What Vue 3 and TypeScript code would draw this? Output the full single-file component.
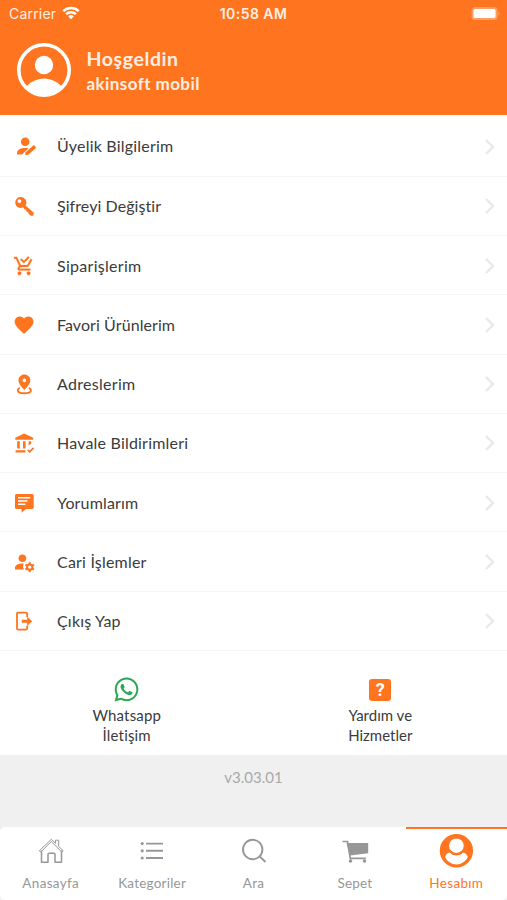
<script setup lang="ts">
interface MenuItem {
  id: string
  label: string
}

interface Tab {
  id: string
  label: string
}

const menu: MenuItem[] = [
  { id: 'profile', label: 'Üyelik Bilgilerim' },
  { id: 'key', label: 'Şifreyi Değiştir' },
  { id: 'orders', label: 'Siparişlerim' },
  { id: 'favorites', label: 'Favori Ürünlerim' },
  { id: 'address', label: 'Adreslerim' },
  { id: 'bank', label: 'Havale Bildirimleri' },
  { id: 'comments', label: 'Yorumlarım' },
  { id: 'account', label: 'Cari İşlemler' },
  { id: 'logout', label: 'Çıkış Yap' },
]

const tabs: Tab[] = [
  { id: 'home', label: 'Anasayfa' },
  { id: 'categories', label: 'Kategoriler' },
  { id: 'search', label: 'Ara' },
  { id: 'cart', label: 'Sepet' },
  { id: 'me', label: 'Hesabım' },
]
const activeTab = 'me'
</script>

<template>
  <div class="screen">
    <header class="header">
      <div class="status">
        <div class="carrier">
          <span>Carrier</span>
          <svg class="wifi" viewBox="0 0 18 14" width="18" height="14">
            <path d="M1.300 5.200a11 11 0 0 1 15.400 0M4.100 8.200a7 7 0 0 1 9.800 0" fill="none" stroke="#fff" stroke-width="2.400" />
            <path d="M6.200 10.300a4 4 0 0 1 5.600 0L9 13.200z" fill="#fff" />
          </svg>
        </div>
        <span class="clock">10:58 AM</span>
        <div class="power">
          <svg viewBox="0 0 31 15" width="31" height="15">
            <rect x="1.500" y="1" width="26" height="13" rx="3.500" fill="#fff" fill-opacity=".3" />
            <rect x="3.500" y="3" width="22" height="9" rx="1.500" fill="#fff" />
            <path d="M28.500 5.500q2 2 0 4z" fill="#fff" fill-opacity=".4" />
          </svg>
        </div>
      </div>
      <div class="welcome">
        <svg class="avatar" viewBox="0 0 54 54" width="54" height="54">
          <defs><clipPath id="avatar-clip"><circle cx="27" cy="27" r="26" /></clipPath></defs>
          <circle cx="27" cy="27" r="25.200" fill="none" stroke="#fff" stroke-width="3.600" />
          <circle cx="27" cy="22" r="9.200" fill="#fff" />
          <path clip-path="url(#avatar-clip)" d="M8 45c5-6 12-9.500 19-9.500s14 3.500 19 9.500v9H8z" fill="#fff" />
        </svg>
        <div class="greeting">
          <div class="hello">Hoşgeldin</div>
          <div class="name">akinsoft mobil</div>
        </div>
      </div>
    </header>

    <main class="menu">
      <div v-for="item in menu" :key="item.id" class="row">
        <svg class="icon" viewBox="0 0 24 24" width="24" height="24" fill="currentColor">
          <g v-if="item.id === 'profile'">
            <circle cx="13.200" cy="6.800" r="4.300" />
            <path d="M5 19.500v-1.700c0-3 3.800-4.900 8.200-4.900 1.200 0 2.300.1 3.300.5L10 19.500z" />
            <path d="m13.100 20.100.6-2.900 7.200-6.500q.9-.7 1.800.1l.9.900q.6.900-.2 1.700l-7.200 6.300z" />
          </g>
          <path v-else-if="item.id === 'key'" fill-rule="evenodd" d="M8.200 3.100a5.400 5.400 0 1 0 2.100 10.500l1.300-.1.700 1.700 1.700.5.400 1.900 1.800.6.700 1.800 1.900 1.700h2.600l.4-2.900-8.300-7.400A5.400 5.400 0 0 0 8.200 3.100M7.400 5.200a1.900 1.900 0 1 1 0 3.800 1.900 1.900 0 0 1 0-3.800" />
          <path v-else-if="item.id === 'orders'" transform="translate(1.100 1.100) scale(.91)" stroke="currentColor" stroke-width=".3" d="M9 20C9 21.100 8.100 22 7 22S5 21.100 5 20 5.900 18 7 18 9 18.900 9 20M17 18C15.900 18 15 18.900 15 20S15.900 22 17 22 19 21.100 19 20 18.100 18 17 18M7.200 14.800V14.700L8.100 13H15.500C16.200 13 16.900 12.600 17.200 12L21.100 5L19.400 4L15.500 11H8.500L4.300 2H1V4H3L6.600 11.600L5.200 14C5.100 14.300 5 14.600 5 15C5 16.100 5.900 17 7 17H19V15H7.400C7.300 15 7.200 14.900 7.200 14.800M18 2.800L16.600 1.400L11.800 6.200L9.200 3.600L7.800 5L11.800 9L18 2.800Z" />
          <path v-else-if="item.id === 'favorites'" transform="translate(.8 .8) scale(.94)" d="M12,21.350L10.550,20.030C5.400,15.360 2,12.270 2,8.500C2,5.410 4.420,3 7.500,3C9.240,3 10.910,3.810 12,5.080C13.090,3.810 14.760,3 16.500,3C19.580,3 22,5.410 22,8.500C22,12.270 18.600,15.360 13.450,20.030L12,21.350Z" />
          <g v-else-if="item.id === 'address'">
            <path fill-rule="evenodd" d="M12.400 2.500c-3.300 0-5.900 2.500-5.900 5.800 0 3.700 3.500 7.300 5.900 9.600 2.400-2.300 5.900-5.900 5.900-9.600 0-3.300-2.600-5.800-5.900-5.800m0 3.900a1.900 1.900 0 1 1 0 3.800 1.900 1.900 0 0 1 0-3.800" />
            <path d="M7.800 15.900C6.500 16.500 5.800 17.400 5.800 18.300c0 1.900 3 3 6.600 3s6.600-1.100 6.600-3c0-.9-.7-1.800-2-2.400" fill="none" stroke="currentColor" stroke-width="1.900" />
          </g>
          <g v-else-if="item.id === 'bank'">
            <path d="m12.200 2.600 9 4.200v1.900H3.300V6.800z" />
            <path d="M5.200 10.300h2.600v7.200H5.200zM11 10.300h2.600v7.200H11zM3.600 19.200h9.800v2.300H3.600z" />
            <path d="M16.600 10.300h2.600v2.300l-2.600 2z" />
            <path d="m15.800 18.800 2 2 3.700-4" fill="none" stroke="currentColor" stroke-width="1.700" />
          </g>
          <g v-else-if="item.id === 'comments'">
            <path d="M4.500 3h15.700q1.500 0 1.500 1.500v12q0 1.500-1.500 1.500H14l-4.400 3.800V18H4.500Q3 18 3 16.500v-12Q3 3 4.500 3z" />
            <path d="M6 6.700h12.300M6 10h9.500M6 13.300h7.500" stroke="#fff" stroke-width="1.400" />
          </g>
          <g v-else-if="item.id === 'account'">
            <circle cx="10.400" cy="8.300" r="3.800" />
            <path d="M3 19.600v-1.900c0-2.500 3.500-4.100 7.300-4.100h1.300a7 7 0 0 0 .3 6z" />
            <circle cx="17.700" cy="17.100" r="2.700" fill="none" stroke="currentColor" stroke-width="2" />
            <path d="M17.700 12.300v2M17.700 19.900v2M13.500 14.700l1.700 1M20.200 18.500l1.700 1M13.500 19.500l1.700-1M20.200 15.700l1.700-1" stroke="currentColor" stroke-width="2.200" />
          </g>
          <g v-else>
            <path d="M15.200 8V4.800q0-1.200-1.200-1.200H6.200Q5 3.600 5 4.800v14.600q0 1.200 1.200 1.200H14q1.200 0 1.200-1.200V16.500" fill="none" stroke="currentColor" stroke-width="1.800" />
            <path d="M9.800 10.700h5.400V7.700l5 4.500-5 4.500v-3H9.800z" />
          </g>
        </svg>
        <span class="label" :class="item.id">{{ item.label }}</span>
        <svg class="chevron" viewBox="0 0 12 18" width="12" height="18">
          <path d="m2 2 7 7-7 7" fill="none" stroke="currentColor" stroke-width="2.400" />
        </svg>
      </div>
    </main>

    <section class="help">
      <div class="help-item contact">
        <svg class="whatsapp" viewBox="1.500 1.500 21 21" width="25" height="25">
          <path d="M12.040 2C6.580 2 2.130 6.450 2.130 11.910C2.130 13.660 2.590 15.360 3.450 16.860L2.050 22L7.300 20.620C8.750 21.410 10.380 21.830 12.040 21.830C17.500 21.830 21.950 17.380 21.950 11.920C21.950 9.270 20.920 6.780 19.050 4.910C17.180 3.030 14.690 2 12.040 2M12.050 3.670C14.250 3.670 16.310 4.530 17.870 6.090C19.420 7.650 20.280 9.720 20.280 11.920C20.280 16.460 16.580 20.150 12.040 20.150C10.560 20.150 9.110 19.760 7.850 19L7.550 18.830L4.430 19.650L5.260 16.610L5.060 16.290C4.240 15 3.800 13.470 3.800 11.910C3.810 7.370 7.500 3.670 12.050 3.670M8.530 7.330C8.370 7.330 8.100 7.390 7.870 7.640C7.650 7.890 7 8.500 7 9.710C7 10.930 7.890 12.100 8 12.270C8.140 12.440 9.760 14.940 12.250 16C12.840 16.270 13.300 16.420 13.660 16.530C14.250 16.720 14.790 16.690 15.220 16.630C15.700 16.560 16.680 16.030 16.890 15.450C17.100 14.870 17.100 14.380 17.040 14.270C16.970 14.170 16.810 14.110 16.560 14C16.310 13.860 15.090 13.260 14.870 13.180C14.640 13.100 14.500 13.060 14.310 13.300C14.150 13.550 13.670 14.110 13.530 14.270C13.380 14.440 13.240 14.460 13 14.340C12.740 14.210 11.940 13.950 11 13.110C10.260 12.450 9.770 11.640 9.620 11.390C9.500 11.150 9.610 11 9.730 10.890C9.840 10.780 10 10.600 10.100 10.450C10.230 10.310 10.270 10.200 10.350 10.040C10.430 9.870 10.390 9.730 10.330 9.610C10.270 9.500 9.770 8.260 9.560 7.770C9.360 7.290 9.160 7.350 9 7.340C8.860 7.340 8.700 7.330 8.530 7.330Z" fill="currentColor" />
        </svg>
        <span>Whatsapp</span>
        <span>İletişim</span>
      </div>
      <div class="help-item">
        <div class="question"><b>?</b></div>
        <span>Yardım ve</span>
        <span>Hizmetler</span>
      </div>
    </section>

    <div class="version">v3.03.01</div>

    <nav class="tabs">
      <div v-for="tab in tabs" :key="tab.id" class="tab" :class="{ active: tab.id === activeTab }">
        <svg viewBox="0 0 36 36" width="36" height="36" fill="none" stroke="currentColor" stroke-width="1.500">
          <g v-if="tab.id === 'home'" stroke-linejoin="round">
            <path d="M8.500 17.500v11.800h6.500v-8.100q0-1 1-1h5q1 0 1 1v8.100h6.500V17.500" />
            <path d="m6.300 17.800 12-11.500 4.200 4V7.200h3.200v6.200l4.500 4.400-1.500 1.200L18.300 8.500 7.800 19z" stroke-width="1" />
          </g>
          <g v-else-if="tab.id === 'categories'" stroke-width="1.900">
            <path d="M12 10.600h17M12 17.800h17M12 25h17" />
            <g fill="currentColor" stroke="none">
              <circle cx="8.200" cy="10.600" r="1.600" />
              <circle cx="8.200" cy="17.800" r="1.600" />
              <circle cx="8.200" cy="25" r="1.600" />
            </g>
          </g>
          <g v-else-if="tab.id === 'search'" stroke-width="1.900">
            <circle cx="16.700" cy="16.500" r="9.700" />
            <path d="m23.500 23.300 6 5.700" />
          </g>
          <g v-else-if="tab.id === 'cart'">
            <path d="M9.500 10h21.700v10.200L13 22.500z" fill="currentColor" stroke="none" />
            <path d="M5.500 8.500h5l2.800 16.800h15.500" stroke-width="1.700" />
            <circle cx="13.500" cy="28" r="1.800" fill="currentColor" stroke="none" />
            <circle cx="27.500" cy="28" r="1.800" fill="currentColor" stroke="none" />
          </g>
          <g v-else stroke="none">
            <circle cx="18.400" cy="17.700" r="16.700" fill="currentColor" />
            <circle cx="18.400" cy="12.700" r="7.300" fill="#fff" />
            <path d="M7 24.300c.6-2.600 2.400-4.400 4.800-4.800 1.500 1.900 3.800 3 6.600 3s5.100-1.100 6.600-3c2.400.4 4.200 2.200 4.800 4.800A13.500 13.500 0 0 1 18.400 31.500 13.500 13.500 0 0 1 7 24.300z" fill="#fff" />
          </g>
        </svg>
        <span class="tab-label" :class="tab.id">{{ tab.label }}</span>
      </div>
    </nav>
  </div>
</template>

<style>
body {
  background: #f0f0f0;
}
</style>

<style scoped>
.screen {
  display: flex;
  flex-direction: column;
  width: 507px;
  height: 900px;
  overflow: hidden;
  background: #f0f0f0;
  color: #3b3b3b;
  font-family: Lato, "Liberation Sans", sans-serif;
}

.header {
  box-sizing: border-box;
  height: 115px;
  flex: none;
  background: #ff751f;
  color: #ffefe2;
}

.status {
  display: grid;
  grid-template-columns: 1fr auto 1fr;
  align-items: center;
  height: 27px;
  padding: 0 6px 0 9px;
  font-family: Inter, "Liberation Sans", sans-serif;
}

.carrier {
  display: flex;
  align-items: center;
  gap: 6px;
  font-size: 14px;
  letter-spacing: 0.2px;
}

.wifi {
  margin-top: -2px;
}

.clock {
  margin-right: 3px;
  font-size: 14px;
  font-weight: 600;
  letter-spacing: 0.45px;
}

.power {
  display: flex;
  justify-content: flex-end;
}

.welcome {
  display: flex;
  gap: 16px;
  padding: 16px 0 0 16.5px;
}

.greeting {
  padding-top: 2.5px;
  font-weight: 700;
}

.hello {
  font-size: 19.5px;
  line-height: 25px;
  letter-spacing: 0.6px;
}

.name {
  font-size: 17px;
  line-height: 25px;
  letter-spacing: 0.42px;
}

.menu {
  box-sizing: border-box;
  flex: none;
  height: 536px;
  padding-top: 2.5px;
  background: #fff;
}

.row {
  display: flex;
  box-sizing: border-box;
  align-items: center;
  height: 59.25px;
  padding: 0 11px 0 12px;
  border-bottom: 1.5px solid #f5f5f5;
}

.row:first-child .label {
  margin-top: -2px;
}

.icon {
  flex: none;
  margin-top: 1px;
  color: #ff751f;
}

.label {
  flex: 1;
  margin: 0 0 0 21px;
  font-size: 16px;
  letter-spacing: 0.2px;
}

.label.key {
  letter-spacing: 0.07px;
}

.label.orders {
  letter-spacing: 0.29px;
}

.label.favorites {
  letter-spacing: 0.08px;
}

.label.address {
  letter-spacing: 0.3px;
}

.label.comments {
  letter-spacing: 0.15px;
}

.chevron {
  margin-top: 1px;
  color: #e9e9e9;
}

.help {
  display: flex;
  flex: none;
  box-sizing: border-box;
  height: 104px;
  padding-top: 26px;
  background: #fff;
}

.help-item {
  display: flex;
  flex: 1;
  flex-direction: column;
  align-items: center;
  font-size: 15px;
  line-height: 20px;
}

.contact {
  letter-spacing: 0.17px;
}

.whatsapp {
  flex: none;
  margin-bottom: 3px;
  color: #29a851;
}

.question {
  width: 22px;
  height: 22px;
  margin: 1.5px 0 4.5px;
  border-radius: 3px;
  background: #ff751f;
  color: #fff;
  font-family: Roboto, sans-serif;
  font-size: 18px;
  line-height: 22px;
  text-align: center;
}

.version {
  flex: 1;
  padding-top: 12px;
  color: #a9a9a9;
  font-size: 15px;
  line-height: 20px;
  text-align: center;
}

.tabs {
  display: flex;
  flex: none;
  height: 73px;
  border-radius: 5px;
  background: #fff;
}

.tab {
  display: flex;
  flex: 1;
  box-sizing: border-box;
  flex-direction: column;
  align-items: center;
  padding-top: 5.5px;
  gap: 6px;
  color: #979797;
  font-size: 13.5px;
  line-height: 17px;
}

.tab-label {
  letter-spacing: 0.22px;
}

.tab-label.home,
.tab-label.me {
  letter-spacing: 0.32px;
}

.tab.active {
  padding-top: 3.5px;
  border-top: 2px solid #ff751f;
  color: #ff751f;
}
</style>
